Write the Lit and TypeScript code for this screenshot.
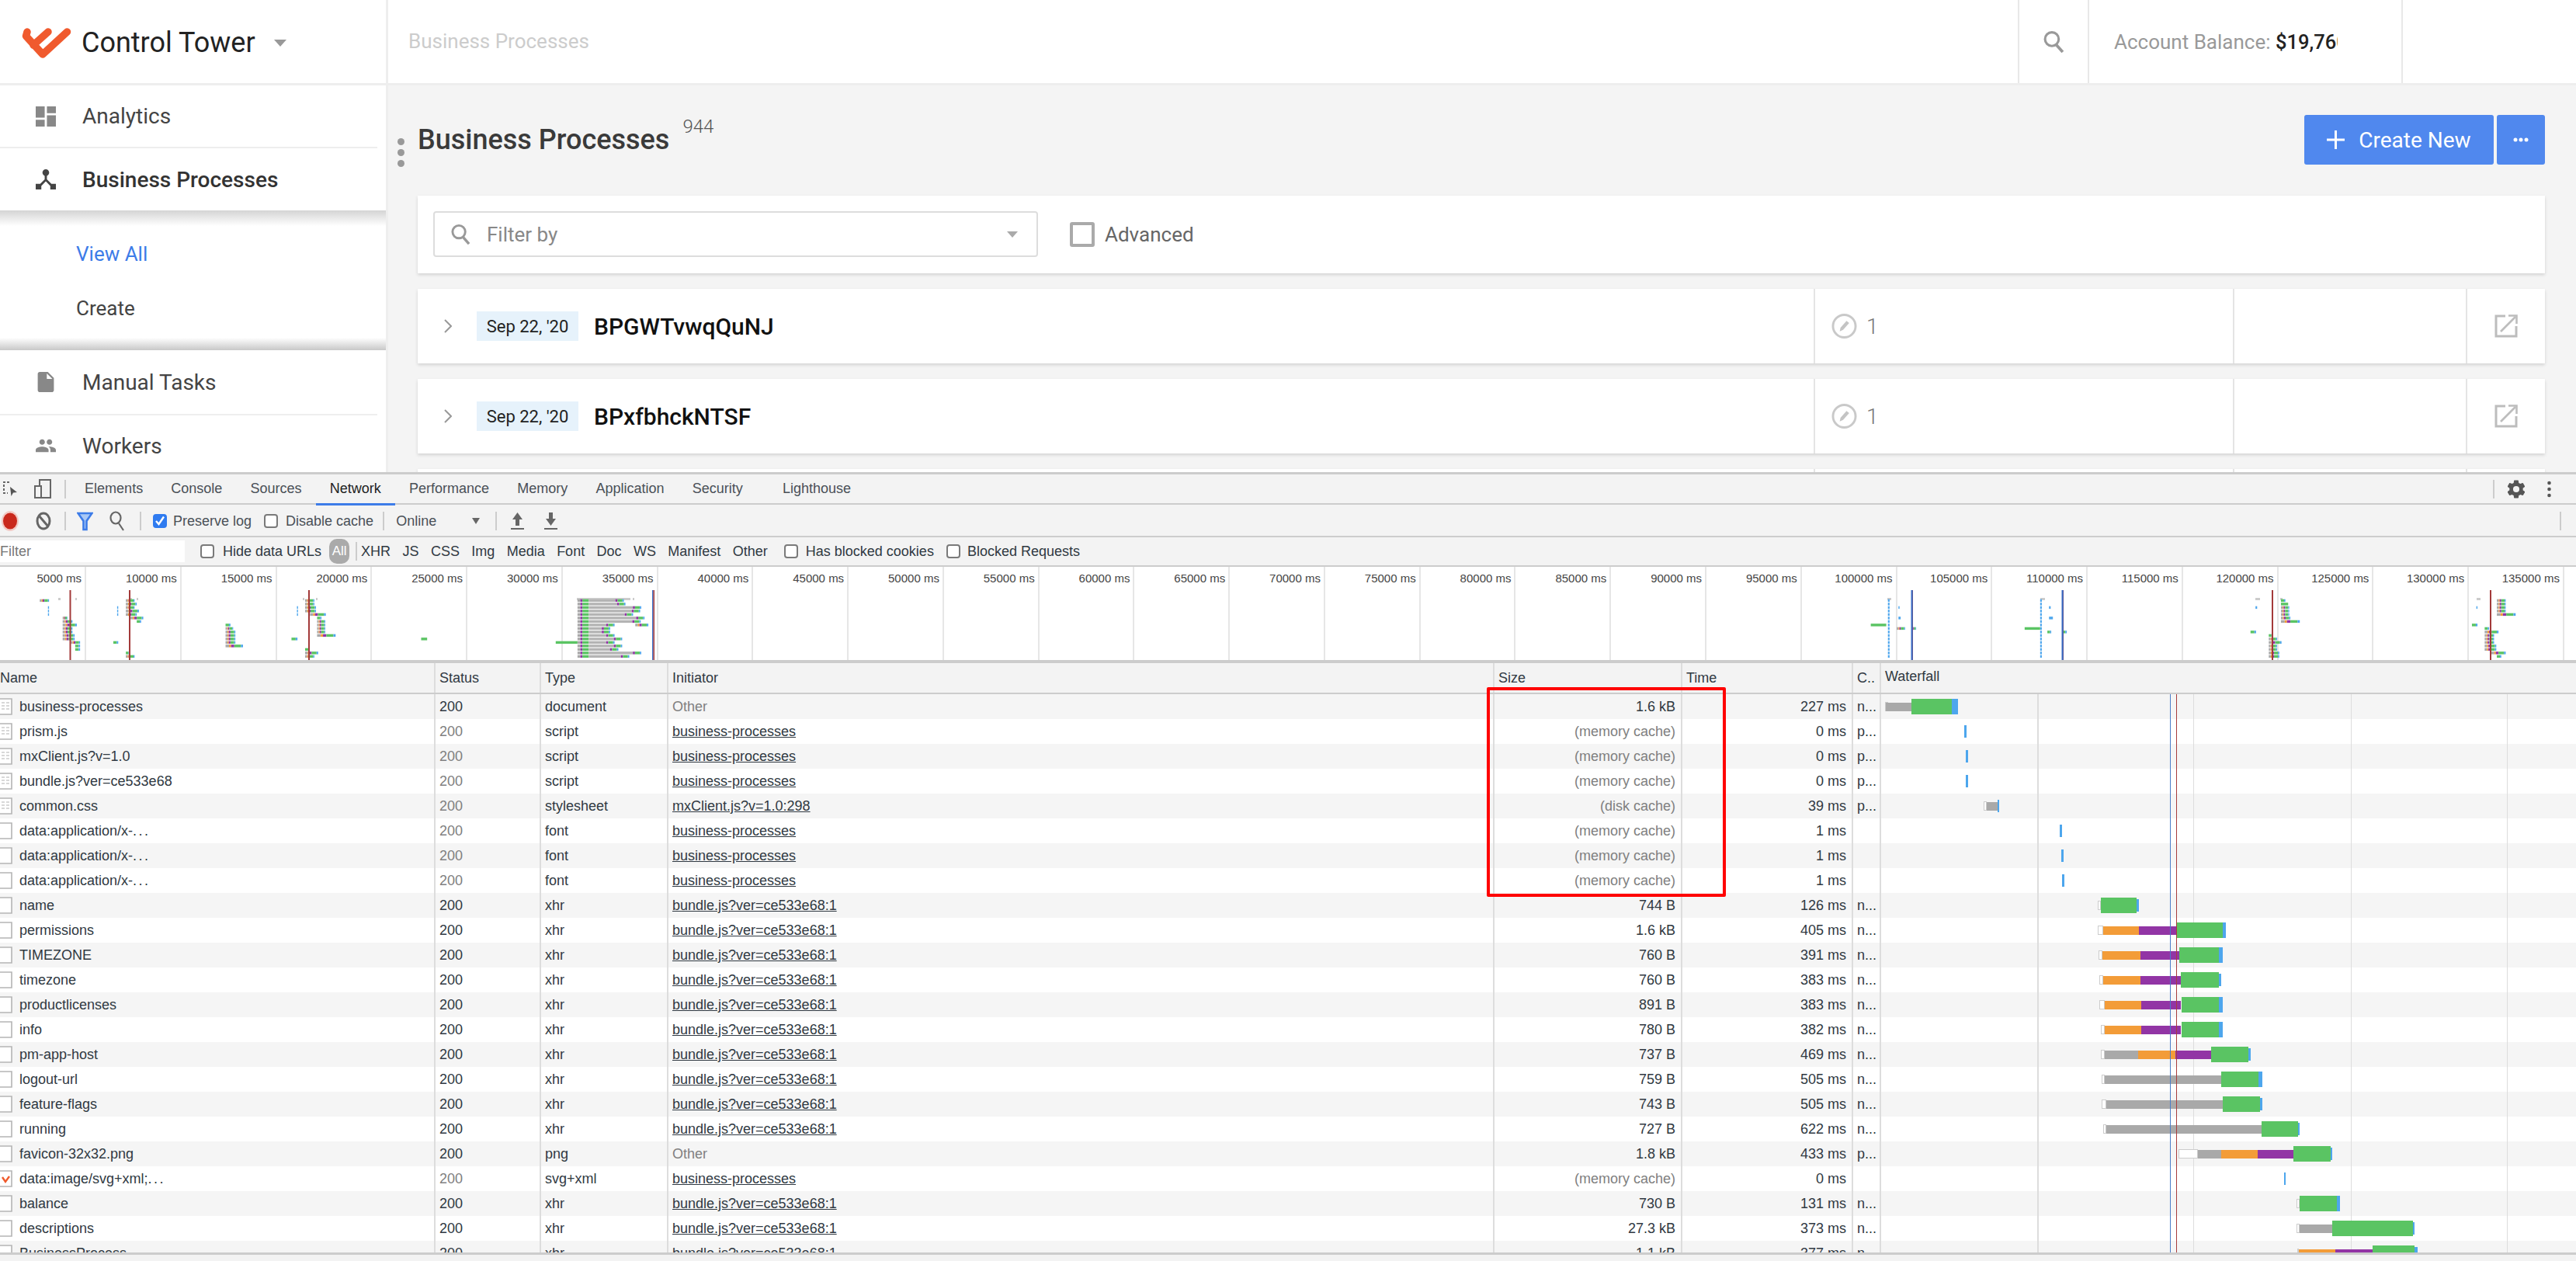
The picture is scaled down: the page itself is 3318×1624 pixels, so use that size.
import { LitElement, html, css, svg } from "lit";
import { customElement } from "lit/decorators.js";

type Req = [string, string, string, string, string, string, string, boolean?, string?];
const B1 = "bundle.js?ver=ce533e68:1";
const BP = "business-processes";
const MC = "(memory cache)";
const reqs: Req[] = [
  [BP, "200", "document", "Other", "1.6 kB", "227 ms", "n...", false, "doc"],
  ["prism.js", "200", "script", BP, MC, "0 ms", "p...", true, "doc"],
  ["mxClient.js?v=1.0", "200", "script", BP, MC, "0 ms", "p...", true, "doc"],
  ["bundle.js?ver=ce533e68", "200", "script", BP, MC, "0 ms", "p...", true, "doc"],
  ["common.css", "200", "stylesheet", "mxClient.js?v=1.0:298", "(disk cache)", "39 ms", "p...", true, "doc"],
  ["data:application/x-...", "200", "font", BP, MC, "1 ms", "", true],
  ["data:application/x-...", "200", "font", BP, MC, "1 ms", "", true],
  ["data:application/x-...", "200", "font", BP, MC, "1 ms", "", true],
  ["name", "200", "xhr", B1, "744 B", "126 ms", "n..."],
  ["permissions", "200", "xhr", B1, "1.6 kB", "405 ms", "n..."],
  ["TIMEZONE", "200", "xhr", B1, "760 B", "391 ms", "n..."],
  ["timezone", "200", "xhr", B1, "760 B", "383 ms", "n..."],
  ["productlicenses", "200", "xhr", B1, "891 B", "383 ms", "n..."],
  ["info", "200", "xhr", B1, "780 B", "382 ms", "n..."],
  ["pm-app-host", "200", "xhr", B1, "737 B", "469 ms", "n..."],
  ["logout-url", "200", "xhr", B1, "759 B", "505 ms", "n..."],
  ["feature-flags", "200", "xhr", B1, "743 B", "505 ms", "n..."],
  ["running", "200", "xhr", B1, "727 B", "622 ms", "n..."],
  ["favicon-32x32.png", "200", "png", "Other", "1.8 kB", "433 ms", "p..."],
  ["data:image/svg+xml;...", "200", "svg+xml", BP, MC, "0 ms", "", true, "logo"],
  ["balance", "200", "xhr", B1, "730 B", "131 ms", "n..."],
  ["descriptions", "200", "xhr", B1, "27.3 kB", "373 ms", "n..."],
  ["BusinessProcess", "200", "xhr", B1, "1.1 kB", "377 ms", "n..."],
];

const C = { n: "#fff", g: "#a9a9a9", o: "#f39c38", p: "#9235a5", G: "#5ac463", b: "#4da6ed" };
type K = keyof typeof C;
// Waterfall segments per row, in units of the 1.708 scale starting at x = 2400.
const wf: [K, number, number][][] = [
  [["n", 48, 54], ["g", 50, 106], ["G", 106, 194], ["b", 194, 209]],
  [["b", 222, 227]],
  [["b", 225, 231]],
  [["b", 225, 231]],
  [["n", 264, 272], ["g", 272, 295], ["b", 295, 299]],
  [["b", 432, 437]],
  [["b", 435, 441]],
  [["b", 437, 442]],
  [["n", 515, 522], ["G", 522, 602], ["b", 602, 606]],
  [["n", 515, 527], ["o", 527, 606], ["p", 606, 689], ["G", 689, 791], ["b", 791, 798]],
  [["n", 518, 526], ["o", 526, 609], ["p", 609, 696], ["G", 696, 783], ["b", 783, 791]],
  [["n", 520, 528], ["o", 528, 609], ["p", 609, 699], ["G", 699, 783], ["b", 783, 788]],
  [["n", 520, 532], ["o", 532, 611], ["p", 611, 699], ["G", 701, 783], ["b", 783, 791]],
  [["n", 522, 532], ["o", 532, 611], ["p", 611, 699], ["G", 701, 783], ["b", 783, 791]],
  [["n", 522, 532], ["g", 532, 604], ["o", 604, 686], ["p", 686, 765], ["G", 765, 848], ["b", 848, 852]],
  [["n", 525, 532], ["g", 532, 788], ["G", 788, 870], ["b", 870, 878]],
  [["n", 525, 535], ["g", 535, 791], ["G", 791, 873], ["b", 873, 878]],
  [["n", 528, 535], ["g", 535, 876], ["G", 876, 956], ["b", 956, 960]],
  [["n", 694, 737], ["g", 737, 788], ["o", 788, 868], ["p", 868, 946], ["G", 946, 1028], ["b", 1028, 1032]],
  [["b", 925, 929]],
  [["n", 953, 960], ["G", 960, 1042], ["b", 1042, 1049]],
  [["n", 953, 960], ["g", 960, 1032], ["G", 1032, 1209], ["b", 1209, 1213]],
  [["n", 955, 959], ["o", 958, 1039], ["p", 1039, 1120], ["G", 1120, 1213], ["b", 1213, 1219]],
];
const wx = (u: number) => u / 1.708;

// Overview bars: [row, x0, x1, kind], x in zoom units.
type OB = [number, number, number, string?];
const left: OB[] = [
  [0, 73, 90], [5, 115, 124], [6, 115, 133], [7, 115, 141], [8, 115, 133], [9, 115, 133], [10, 115, 137], [11, 115, 137], [12, 130, 147], [12, 208, 217, "g"], [13, 138, 147, "g"], [14, 138, 147, "g"],
  [2, 88, 90, "t"], [3, 88, 90, "t"], [4, 88, 90, "t"],
  [0, 231, 247], [1, 231, 251], [2, 231, 247], [3, 231, 255], [4, 231, 251], [5, 239, 263], [6, 251, 259, "g"], [15, 231, 238, "g"], [16, 231, 247],
  [2, 215, 217, "t"], [3, 215, 217, "t"], [4, 215, 217, "t"],
  [7, 414, 423, "g"], [8, 414, 428], [9, 414, 432], [10, 414, 432], [11, 414, 432], [12, 414, 432], [13, 414, 446],
  [0, 560, 577], [1, 560, 577], [2, 560, 580], [3, 560, 580], [4, 569, 598], [5, 582, 590, "g"], [6, 582, 597], [7, 582, 597], [8, 582, 597], [9, 582, 597], [10, 582, 616], [11, 535, 546, "g"], [14, 560, 568, "g"], [15, 560, 584], [16, 560, 577],
  [2, 545, 547, "t"], [3, 545, 547, "t"], [4, 545, 547, "t"],
  [11, 773, 784, "G"],
  [0, 1060, 1145, "l"], [1, 1060, 1148, "l"], [2, 1060, 1177, "l"], [3, 1060, 1175, "l"], [4, 1060, 1162, "l"], [5, 1060, 1183, "l"], [6, 1060, 1176, "l"], [7, 1060, 1128, "l"], [7, 1166, 1190], [8, 1060, 1120, "l"], [9, 1060, 1120, "l"], [10, 1060, 1128, "l"], [11, 1060, 1142, "l"], [12, 1020, 1060, "G"], [12, 1060, 1128, "l"], [13, 1060, 1142, "l"], [14, 1060, 1135, "l"], [15, 1060, 1177, "l"], [16, 1060, 1155, "l"],
];
const dash = (x: number) => Array.from({ length: 17 }, (_, i) => [i, x, x + 3, "t"] as OB);
const right: OB[] = [
  ...dash(325), [7, 294, 322, "G"], [8, 341, 356], [8, 368, 376], [2, 344, 346, "t"], [5, 344, 348, "t"],
  ...dash(600), [8, 572, 600, "G"], [9, 613, 620, "g"], [9, 640, 648, "g"], [2, 616, 619, "t"], [5, 616, 623, "t"],
  [0, 1035, 1043, "g"], [1, 1035, 1048, "G"], [2, 1035, 1050], [3, 1035, 1050], [4, 1035, 1050], [5, 1035, 1052], [6, 1035, 1069], [9, 980, 990, "g"], [10, 1013, 1020, "g"], [11, 1013, 1028], [12, 1013, 1036], [13, 1013, 1028], [14, 1013, 1028], [15, 1013, 1032], [16, 1013, 1032], [2, 989, 992, "t"],
  [0, 1425, 1441], [1, 1425, 1441], [2, 1425, 1441], [3, 1425, 1441], [4, 1425, 1459], [7, 1380, 1390, "g"], [8, 1403, 1411, "g"], [9, 1403, 1428], [10, 1403, 1420], [11, 1403, 1420], [12, 1403, 1420], [13, 1403, 1424], [14, 1403, 1424], [15, 1415, 1441], [16, 1425, 1433, "g"], [2, 1388, 1390, "t"],
];
const segs = (x: number, w: number, kind?: string): [string, number, number][] => {
  if (kind === "t") return [[C.b, x, w]];
  if (kind === "G") return [[C.G, x, w]];
  if (kind === "g") return [[C.G, x, w * 0.7], [C.b, x + w * 0.7, w * 0.3]];
  if (kind === "l") {
    const h = 9;
    return [[C.g, x, h * 0.4], [C.p, x + h * 0.4, h * 0.3], [C.G, x + h * 0.7, h * 0.9], ["#b4b4b4", x + h * 1.6, w - h * 2.8], [C.p, x + w - h * 1.2, h * 0.3], [C.G, x + w - h * 0.9, h * 0.7], [C.b, x + w - h * 0.2, h * 0.2]];
  }
  return [[C.g, x, w * 0.2], [C.o, x + w * 0.2, w * 0.12], [C.p, x + w * 0.32, w * 0.18], [C.G, x + w * 0.5, w * 0.38], [C.b, x + w * 0.88, w * 0.12]];
};
const obar = (b: OB, conv: (u: number) => number) => {
  const x = conv(b[1]);
  const w = conv(b[2]) - x;
  const y = 41.7 + 4.5 * b[0];
  return segs(x, w, b[3]).map(([f, sx, sw]) => svg`<rect x=${sx} y=${y} width=${sw} height="3.4" fill=${f}></rect>`);
};
const zl = (u: number) => u / 1.425;
const zr = (u: number) => 2200 + u / 1.4025;
const vline = (x: number, f: string, w = 2) => svg`<rect x=${x} y="30" width=${w} height="90" fill=${f}></rect>`;

const marks = Array.from({ length: 27 }, (_, i) => `${(i + 1) * 5000} ms`);

const dashboard = html`<svg class="nic" viewBox="3 3 18 18"><path d="M3 13h8V3H3v10zm0 8h8v-6H3v6zm10 0h8V11h-8v10zm0-18v6h8V3h-8z"/></svg>`;
const hub = html`<svg class="nic dark" viewBox="3 3 18 18"><path d="M17 16l-4-4V8.82C14.16 8.4 15 7.3 15 6c0-1.66-1.34-3-3-3S9 4.34 9 6c0 1.3.84 2.4 2 2.82V12l-4 4H3v5h5v-3.05l4-4.2 4 4.2V21h5v-5h-4z"/></svg>`;
const file = html`<svg class="nic" viewBox="2 2 20 20"><path d="M6 2c-1.1 0-1.99.9-1.99 2L4 20c0 1.1.89 2 1.99 2H18c1.1 0 2-.9 2-2V8l-6-6H6zm7 7V3.5L18.5 9H13z"/></svg>`;
const people = html`<svg class="nic" viewBox="1 1 22 22"><path d="M16 11c1.66 0 2.99-1.34 2.99-3S17.66 5 16 5c-1.66 0-3 1.34-3 3s1.34 3 3 3zm-8 0c1.66 0 2.99-1.34 2.99-3S9.66 5 8 5C6.34 5 5 6.34 5 8s1.34 3 3 3zm0 2c-2.33 0-7 1.17-7 3.5V19h14v-2.5c0-2.33-4.67-3.5-7-3.5zm8 0c-.29 0-.62.02-.97.05 1.16.84 1.97 1.97 1.97 3.45V19h6v-2.5c0-2.33-4.67-3.5-7-3.5z"/></svg>`;
const lens = (cls: string) => html`<svg class=${cls} viewBox="0 0 28 28" fill="none" stroke="currentColor"><circle cx="11.5" cy="11" r="8.5" stroke-width="3"/><path d="M17 18l8 9" stroke-width="3.6"/></svg>`;
const pencil = html`<svg class="pen" viewBox="0 0 34 34"><circle cx="17" cy="17" r="15" fill="none" stroke="#c9c9c9" stroke-width="3"/><path d="M11 24l1-5 8-9 3.5 3-8 9z" fill="#c4c4c4"/></svg>`;
const ext = html`<svg class="ext" viewBox="0 0 30 30" fill="none" stroke="#bdbdbd" stroke-width="3"><path d="M14 2H2v26h26V15"/><path d="M8 22L27 3" stroke-width="2.6"/><path d="M18 1.500h10.500V12" stroke-width="2.6"/></svg>`;

@customElement("dt-check")
class DtCheck extends LitElement {
  static properties = { on: { type: Boolean } };
  on = false;
  static styles = css`
    :host { display: block; flex: none; width: 18px; height: 18px; box-sizing: border-box; border: 2px solid #7a7a7a; border-radius: 4px; background: #fff; }
    :host([on]) { background: #2f7bf0; border-color: #2f7bf0; }
    svg { display: block; width: 14px; height: 14px; }
  `;
  render() {
    return this.on ? html`<svg viewBox="0 0 14 14" fill="none" stroke="#fff" stroke-width="2.4"><path d="M2 7l3.500 4L12 1.500"/></svg>` : html``;
  }
}

@customElement("app-root")
export class AppRoot extends LitElement {
  static styles = css`
    :host { display: block; position: relative; width: 3318px; height: 1624px; overflow: hidden; background: #fff; font-family: Roboto, "Liberation Sans", sans-serif; color: #333; }
    .top { height: 608px; overflow: hidden; display: flex; flex-direction: column; }
    .hdr { flex: none; height: 107px; border-bottom: 3px solid #eee; display: flex; }
    .brand { flex: none; border-right: 3px solid #eee; display: flex; align-items: center; padding-left: 28px; width: 469px; }
    .logo { width: 64px; height: 41px; margin-top: 4px; flex: none; }
    .brand b { font-weight: 400; font-size: 36px; color: #222; margin-left: 13px; margin-top: 3px; }
    .caret { width: 0; height: 0; border: 8px solid transparent; border-top: 9px solid #999; border-bottom: 0; margin-left: 24px; margin-top: 4px; }
    .crumb { flex: 1; padding-left: 26px; font-size: 26px; color: #ccc; line-height: 106px; white-space: nowrap; }
    .srch { flex: none; width: 88px; border-left: 2px solid #e8e8e8; display: flex; align-items: center; justify-content: center; color: #999; }
    .hlens { width: 29px; height: 29px; }
    .bal { flex: none; width: 370px; padding-left: 32px; border-left: 2px solid #e8e8e8; display: flex; align-items: center; font-size: 26px; color: #999; }
    .bal span { display: block; width: 288px; overflow: hidden; white-space: nowrap; }
    .bal b { color: #222; font-weight: 500; font-size: 25.500px; }
    .uslot { flex: none; width: 223px; border-left: 2px solid #e8e8e8; }
    .body { flex: 1; display: flex; min-height: 0; }
    .side { flex: none; width: 497px; border-right: 3px solid #eee; overflow: hidden; }
    .nav { display: flex; align-items: center; gap: 34px; padding-left: 46px; font-size: 28px; color: #444; }
    .nav.an { height: 79px; }
    .nav.bp { height: 80px; font-weight: 500; color: #333; }
    .nav.mt { height: 82px; }
    .nav.wk { height: 78px; }
    .rule { height: 2px; width: 486px; background: #eee; }
    .nic { width: 26px; height: 26px; fill: #888; flex: none; }
    .nic.dark { fill: #444; }
    .sub { height: 180px; box-sizing: border-box; padding: 21px 0 19px 98px; background: linear-gradient(#d4d4d4, #fff 20px, #fff 164px, #c8c8c8); font-size: 26px; }
    .sub div { height: 70px; line-height: 70px; color: #444; }
    .sub .on { color: #3d7ce8; }
    .main { flex: 1; min-width: 0; background: #f4f4f4; padding: 38px 40px 0 38px; }
    .head { display: flex; height: 64px; margin-bottom: 40px; align-items: center; margin-left: -26px; }
    .dots { flex: none; width: 9px; margin-right: 17px; margin-top: 32px; display: flex; flex-direction: column; gap: 5px; }
    .dots i { display: block; width: 9px; height: 9px; border-radius: 50%; background: #999; }
    h1 { margin: 0; font-size: 36px; font-weight: 500; color: #3a3a3a; white-space: nowrap; }
    .count { align-self: flex-start; margin-left: 17px; line-height: 30px; font-size: 24px; font-weight: 300; color: #555; }
    .sp { flex: 1; }
    .btn { flex: none; height: 64px; background: #5088ee; border-radius: 3px; color: #fff; display: flex; align-items: center; justify-content: center; }
    .btn.cn { width: 244px; gap: 18px; font-size: 28px; margin-right: 4px; }
    .btn.mr { width: 62px; }
    .plus { width: 23px; height: 24px; }
    .more { width: 20px; height: 6px; }
    .card { background: #fff; box-shadow: 0 2px 4px rgba(0,0,0,.14); margin-bottom: 20px; display: flex; }
    .fc { height: 100px; padding: 20px; box-sizing: border-box; align-items: flex-start; }
    .input { flex: none; width: 779px; height: 59px; box-sizing: border-box; border: 2px solid #ddd; border-radius: 4px; display: flex; align-items: center; padding-left: 20px; font-size: 26px; color: #888; }
    .ilens { width: 27px; height: 27px; color: #999; margin-right: 20px; flex: none; }
    .input .sp2 { flex: 1; }
    .darr { width: 0; height: 0; border: 7px solid transparent; border-top: 8px solid #aaa; border-bottom: 0; margin-right: 24px; }
    .adv { display: flex; align-items: center; height: 59px; margin-left: 41px; gap: 13px; font-size: 26px; color: #666; }
    .adv i { display: block; width: 32px; height: 32px; box-sizing: border-box; border: 4px solid #aaa; border-radius: 3px; }
    .pr { height: 96px; }
    .pr > div { display: flex; align-items: center; box-sizing: border-box; }
    .c1 { flex: none; width: 1798px; padding-left: 34px; }
    .chev { width: 10px; height: 18px; flex: none; }
    .pill { margin-left: 32px; width: 131px; height: 38px; background: #e6f2fb; font-size: 22px; color: #222; display: flex; align-items: center; justify-content: center; flex: none; white-space: nowrap; }
    .nm { margin-left: 20px; font-size: 30px; font-weight: 500; color: #111; }
    .c2 { flex: none; width: 540px; border-left: 2px solid #e4e4e4; padding-left: 21px; gap: 12px; font-size: 28px; font-weight: 300; color: #777; }
    .pen { width: 33px; height: 34px; flex: none; }
    .c3 { flex: none; width: 300px; border-left: 2px solid #e4e4e4; }
    .c4 { flex: 1; border-left: 2px solid #e4e4e4; justify-content: center; }
    .ext { width: 30px; height: 30px; }

    .dt { height: 1016px; box-sizing: border-box; border-top: 3px solid #ccc; background: #f3f3f3; font-family: "Liberation Sans", Arial, sans-serif; font-size: 18px; color: #303942; display: flex; flex-direction: column; }
    .row { display: flex; align-items: center; flex: none; box-sizing: border-box; white-space: nowrap; }
    .tabs { height: 39px; border-bottom: 2px solid #ccc; position: relative; }
    .dic { flex: none; }
    .sep { flex: none; width: 2px; height: 24px; background: #ccc; }
    .tab { flex: none; position: relative; padding: 0 18.100px; line-height: 37px; color: #4a5057; }
    .tab.on { color: #222; }
    .tab.on::after { content: ""; position: absolute; left: 0; right: 0; bottom: -3px; height: 3px; background: #3d7ce8; }
    .tab.lh { margin-left: 15px; }
    .tb { height: 42px; border-bottom: 2px solid #ccc; color: #4a5057; padding-top: 2px; }
    .fr { height: 38px; border-bottom: 2px solid #ccc; }
    .finp { flex: none; width: 238px; height: 28px; background: #fff; line-height: 28px; color: #777; }
    .pillall { flex: none; width: 26px; height: 32px; border-radius: 10px; background: #aaa; color: #fff; font-size: 17px; display: flex; align-items: center; justify-content: center; }
    .ft { flex: none; }
    .ov { height: 124px; flex: none; box-sizing: border-box; border-bottom: 4px solid #ccc; background: #fff; display: flex; position: relative; overflow: hidden; }
    .mk { flex: none; width: 122.770px; box-sizing: border-box; border-right: 2px solid #e6e6e6; text-align: right; padding: 6px 4px 0 0; font-size: 15px; line-height: 18px; color: #444; white-space: nowrap; }
    .mk:first-child { margin-left: -11.770px; }
    .ovbars { position: absolute; left: 0; top: 0; width: 3318px; height: 120px; }
    .tw { position: relative; height: 762px; flex: none; overflow: hidden; box-sizing: border-box; border-bottom: 3px solid #ccc; }
    .grid { display: grid; grid-template-columns: 559px 136px 164px 1064px 242px 220px 36px 897px; }
    .th { height: 40px; box-sizing: border-box; border-bottom: 2px solid #ccc; line-height: 38px; background: #f3f3f3; }
    .tr { height: 32px; line-height: 32px; background: #fff; }
    .tr.alt { background: #f5f5f5; }
    .cell { box-sizing: border-box; padding: 0 7px 0 5px; border-left: 2px solid #ddd; white-space: nowrap; overflow: hidden; position: relative; }
    .cell.name { border-left: 0; padding-left: 25px; }
    .th .cell.name { padding-left: 0; }
    .cell.r { text-align: right; }
    .cell.wf { padding-left: 5px; }
    .th .wf { line-height: 34px; }
    .ell { letter-spacing: 2.500px; }
    .gray { color: #808080; }
    .lnk { text-decoration: underline; }
    .fi { position: absolute; left: 0; top: 5px; width: 16px; height: 22px; }
    .wfs { position: absolute; left: 2423px; top: 40px; width: 895px; height: 722px; pointer-events: none; }
    .wfs rect { shape-rendering: crispEdges; }
    .red { position: absolute; left: 1915px; top: 885px; width: 308px; height: 270px; box-sizing: border-box; border: 4px solid #f00; border-radius: 2px; }
  `;

  private fileIcon(k?: string) {
    return svg`<svg class="fi" viewBox="0 0 16 22">
      <path d="M-2 1H15V21H-2z" fill="#fff" stroke="#b5b5b5" stroke-width="1.600"/>
      ${k === "doc" ? svg`<path d="M2 6h4M8 6h4M2 10h4M8 10h4M2 14h4M8 14h4" stroke="#d8d8d8" stroke-width="2"/>` : ""}
      ${k === "logo" ? svg`<path d="M3 9l4 6 5-7" fill="none" stroke="#f05a2c" stroke-width="2.400"/>` : ""}
    </svg>`;
  }

  private nameText(n: string) {
    return n.endsWith("...") ? html`${n.slice(0, -3)}<span class="ell">...</span>` : n;
  }

  private card(date: string, name: string) {
    return html`<div class="card pr">
      <div class="c1">
        <svg class="chev" viewBox="0 0 10 18" fill="none" stroke="#999" stroke-width="2"><path d="M1 1l8 8-8 8"/></svg>
        <span class="pill">${date}</span><span class="nm">${name}</span>
      </div>
      <div class="c2">${pencil}<span>1</span></div>
      <div class="c3"></div>
      <div class="c4">${ext}</div>
    </div>`;
  }

  render() {
    const M = (px: number) => `margin-left:${px}px`;
    return html`
      <div class="top">
        <div class="hdr">
          <div class="brand">
            <svg class="logo" viewBox="28 32 64 41" fill="none" stroke="#f05a2e" stroke-width="9.500" stroke-linecap="round" stroke-linejoin="round">
              <path d="M35 38L33.500 43.500L55 67L86.500 38"/><path d="M62 38L43 55"/>
            </svg>
            <b>Control Tower</b><span class="caret"></span>
          </div>
          <div class="crumb">Business Processes</div>
          <div class="srch">${lens("hlens")}</div>
          <div class="bal"><span>Account Balance: <b>$19,760.00</b></span></div>
          <div class="uslot"></div>
        </div>
        <div class="body">
          <div class="side">
            <div class="nav an">${dashboard}<span>Analytics</span></div>
            <div class="rule"></div>
            <div class="nav bp">${hub}<span>Business Processes</span></div>
            <div class="sub"><div class="on">View All</div><div>Create</div></div>
            <div class="nav mt">${file}<span>Manual Tasks</span></div>
            <div class="rule"></div>
            <div class="nav wk">${people}<span>Workers</span></div>
          </div>
          <div class="main">
            <div class="head">
              <div class="dots"><i></i><i></i><i></i></div>
              <h1>Business Processes</h1>
              <span class="count">944</span>
              <span class="sp"></span>
              <div class="btn cn">
                <svg class="plus" viewBox="0 0 23 24" stroke="#fff" stroke-width="3"><path d="M11.500 0v24M0 12h23"/></svg>
                <span>Create New</span>
              </div>
              <div class="btn mr"><svg class="more" viewBox="0 0 20 6" fill="#fff"><circle cx="3" cy="3" r="2.500"/><circle cx="10" cy="3" r="2.500"/><circle cx="17" cy="3" r="2.500"/></svg></div>
            </div>
            <div class="card fc">
              <div class="input">${lens("ilens")}<span>Filter by</span><span class="sp2"></span><span class="darr"></span></div>
              <div class="adv"><i></i><span>Advanced</span></div>
            </div>
            ${this.card("Sep 22, '20", "BPGWTvwqQuNJ")}
            ${this.card("Sep 22, '20", "BPxfbhckNTSF")}
            ${this.card("", "")}
          </div>
        </div>
      </div>
      <div class="dt">
        <div class="row tabs">
          <svg class="dic" style=${M(4)} width="20" height="20" viewBox="0 0 20 20" fill="none" stroke="#666" stroke-width="2"><path d="M8 1H1v14h5" stroke-dasharray="3 2"/><path d="M9 7l1.500 12 2.500-4.500 5-.5z" fill="#555" stroke="none"/></svg>
          <svg class="dic" style=${M(20)} width="22" height="25" viewBox="0 0 22 25" fill="none" stroke="#666" stroke-width="2"><path d="M7 8V1h14v23H9"/><rect x="1" y="9" width="8" height="15"/></svg>
          <span class="sep" style=${M(17)}></span>
          <span class="tab" style=${M(6)}>Elements</span>
          <span class="tab">Console</span>
          <span class="tab">Sources</span>
          <span class="tab on">Network</span>
          <span class="tab">Performance</span>
          <span class="tab">Memory</span>
          <span class="tab">Application</span>
          <span class="tab">Security</span>
          <span class="tab lh">Lighthouse</span>
          <span class="sp"></span>
          <span class="sep" style="margin-right:17px"></span>
          <svg class="dic" width="22" height="24" viewBox="2.500 2 19 20" fill="#555"><path d="M19.400 13c.04-.3.1-.65.1-1s-.06-.7-.1-1l2.100-1.650c.2-.15.25-.42.12-.64l-2-3.460c-.12-.22-.39-.3-.61-.22l-2.490 1a7.300 7.300 0 0 0-1.690-.98l-.38-2.650A.49.49 0 0 0 14 2h-4c-.25 0-.46.18-.49.42l-.38 2.650c-.61.25-1.170.59-1.690.98l-2.490-1c-.23-.09-.49 0-.61.22l-2 3.460c-.13.22-.07.49.12.64L4.570 11c-.04.32-.07.66-.07 1s.03.68.07 1l-2.110 1.650c-.19.15-.25.42-.12.64l2 3.460c.12.22.39.3.61.22l2.490-1c.52.4 1.080.73 1.690.98l.38 2.650c.03.24.24.42.49.42h4c.25 0 .46-.18.49-.42l.38-2.650c.61-.25 1.170-.59 1.690-.98l2.490 1c.23.09.49 0 .61-.22l2-3.460c.12-.22.07-.49-.12-.64L19.400 13zM12 15.500a3.500 3.500 0 1 1 0-7 3.500 3.500 0 0 1 0 7z"/></svg>
          <svg class="dic" style=${M(29)} width="5" height="22" viewBox="0 0 5 22" fill="#555"><circle cx="2.500" cy="3" r="2.300"/><circle cx="2.500" cy="11" r="2.300"/><circle cx="2.500" cy="19" r="2.300"/></svg>
          <span class="dic" style="width:32px"></span>
        </div>
        <div class="row tb">
          <svg class="dic" style=${M(2)} width="22" height="26" viewBox="0 0 22 26"><ellipse cx="11" cy="13" rx="11" ry="13" fill="#f2c9c4"/><ellipse cx="11" cy="13" rx="9" ry="10.500" fill="#c9281c"/></svg>
          <svg class="dic" style=${M(22)} width="20" height="24" viewBox="0 0 20 24" fill="none" stroke="#666" stroke-width="3"><ellipse cx="10" cy="12" rx="8" ry="10"/><path d="M4 5l12 14"/></svg>
          <span class="sep" style=${M(17)}></span>
          <svg class="dic" style=${M(14)} width="21" height="25" viewBox="0 0 21 25" fill="none" stroke="#3d7ce8" stroke-width="2.600"><path d="M1.500 2h18l-7 10v11h-4V12z" fill="#a9c8f5"/></svg>
          <svg class="dic" style=${M(21)} width="20" height="26" viewBox="0 0 20 26" fill="none" stroke="#666" stroke-width="2.200"><ellipse cx="8" cy="9" rx="6.500" ry="7.500"/><path d="M12 16l6 9"/></svg>
          <span class="sep" style=${M(19)}></span>
          <dt-check style=${M(15)} on></dt-check>
          <span class="ft" style=${M(8)}>Preserve log</span>
          <dt-check style=${M(16)}></dt-check>
          <span class="ft" style=${M(10)}>Disable cache</span>
          <span class="sep" style=${M(12)}></span>
          <span class="ft" style=${M(15)}>Online</span>
          <svg class="dic" style=${M(46)} width="10" height="8" viewBox="0 0 10 8" fill="#666"><path d="M0 0h10L5 8z"/></svg>
          <span class="sep" style=${M(20)}></span>
          <svg class="dic" style=${M(18)} width="17" height="22" viewBox="0 0 17 22" fill="#666"><path d="M8.500 0L15 9h-4v8H6V9H2zM0 20h17v2H0z"/></svg>
          <svg class="dic" style=${M(26)} width="17" height="22" viewBox="0 0 17 22" fill="#666"><path d="M6 0h5v8h4l-6.500 9L2 8h4zM0 20h17v2H0z"/></svg>
          <span class="sp"></span>
          <span class="sep" style="margin-right:19px"></span>
        </div>
        <div class="row fr">
          <div class="finp">Filter</div>
          <dt-check style=${M(20)}></dt-check>
          <span class="ft" style=${M(11)}>Hide data URLs</span>
          <span class="pillall" style=${M(10)}>All</span>
          <span class="sep" style=${M(8)}></span>
          <span class="ft" style=${M(5)}>XHR</span>
          <span class="ft" style=${M(15.4)}>JS</span>
          <span class="ft" style=${M(15.4)}>CSS</span>
          <span class="ft" style=${M(15.4)}>Img</span>
          <span class="ft" style=${M(15.4)}>Media</span>
          <span class="ft" style=${M(15.4)}>Font</span>
          <span class="ft" style=${M(15.4)}>Doc</span>
          <span class="ft" style=${M(15.4)}>WS</span>
          <span class="ft" style=${M(15.4)}>Manifest</span>
          <span class="ft" style=${M(15.4)}>Other</span>
          <dt-check style=${M(21)}></dt-check>
          <span class="ft" style=${M(10)}>Has blocked cookies</span>
          <dt-check style=${M(16)}></dt-check>
          <span class="ft" style=${M(9)}>Blocked Requests</span>
        </div>
        <div class="ov">
          ${marks.map((m) => html`<div class="mk">${m}</div>`)}
          <svg class="ovbars">
            <rect x="75" y="40" width="3" height="3" fill="#ccc"></rect><rect x="97" y="40" width="2" height="3" fill="#ccc"></rect>
            <rect x="168" y="40" width="2" height="3" fill="#ccc"></rect><rect x="176" y="40" width="2" height="3" fill="#ccc"></rect>
            <rect x="390" y="40" width="2" height="3" fill="#ccc"></rect><rect x="407" y="40" width="2" height="3" fill="#ccc"></rect>
            <rect x="743" y="40" width="69" height="3" fill="#ccc"></rect><rect x="815" y="40" width="2" height="3" fill="#ccc"></rect>
            <rect x="2431" y="40" width="5" height="3" fill="#ccc"></rect><rect x="2628" y="40" width="6" height="3" fill="#ccc"></rect>
            <rect x="2905" y="40" width="6" height="3" fill="#ccc"></rect><rect x="2937" y="40" width="3" height="3" fill="#ccc"></rect>
            <rect x="3190" y="40" width="5" height="3" fill="#ccc"></rect>
            ${left.map((b) => obar(b, zl))}
            ${right.map((b) => obar(b, zr))}
            ${vline(89.5, "#a33a3a")}${vline(166, "#a33a3a")}${vline(397, "#a33a3a")}
            ${vline(840, "#3a6fc8", 1.5)}${vline(841.5, "#a33a3a", 1.5)}
            ${vline(2461.5, "#3a6fc8", 1.5)}${vline(2463, "#5a5a9a", 1)}
            ${vline(2655.5, "#3a6fc8", 1.5)}${vline(2657, "#5a5a9a", 1)}
            ${vline(2926, "#a33a3a")}${vline(3207, "#a33a3a")}
          </svg>
        </div>
        <div class="tw">
          <div class="grid th">
            <div class="cell name">Name</div><div class="cell">Status</div><div class="cell">Type</div><div class="cell">Initiator</div>
            <div class="cell">Size</div><div class="cell">Time</div><div class="cell">C..</div><div class="cell wf">Waterfall</div>
          </div>
          ${reqs.map((r, i) => html`<div class="grid tr ${i % 2 === 0 ? "alt" : ""}">
            <div class="cell name">${this.fileIcon(r[8])}${this.nameText(r[0])}</div>
            <div class="cell ${r[7] ? "gray" : ""}">${r[1]}</div>
            <div class="cell">${r[2]}</div>
            <div class="cell ${r[3] === "Other" ? "gray" : "lnk"}">${r[3]}</div>
            <div class="cell r ${r[7] ? "gray" : ""}">${r[4]}</div>
            <div class="cell r">${r[5]}</div>
            <div class="cell">${r[6]}</div>
            <div class="cell wf"></div>
          </div>`)}
          <svg class="wfs">
            ${[2624, 2824.5, 3027.5, 3228.5].map((x) => svg`<rect x=${x - 2423} y="0" width="1.500" height="722" fill="#ddd"></rect>`)}
            ${wf.map((segsRow, i) => segsRow.map(([k, a, b]) => {
              const x = wx(a) + 2400 - 2423;
              const w = wx(b) - wx(a);
              const cy = i * 32 + 16;
              if (k === "G") return svg`<rect x=${x} y=${cy - 10} width=${w} height="20" fill=${C.G}></rect>`;
              if (k === "b") return svg`<rect x=${x} y=${cy - (w < 4 ? 8 : 10)} width=${w} height=${w < 4 ? 16 : 20} fill=${C.b}></rect>`;
              if (k === "n") return svg`<rect x=${x + 0.5} y=${cy - 5.5} width=${w - 1} height="11" fill="#fff" stroke="#ccc"></rect>`;
              return svg`<rect x=${x} y=${cy - 5.5} width=${w} height="11" fill=${C[k]}></rect>`;
            }))}
            <rect x="372" y="0" width="1" height="722" fill="#4a7cc8"></rect>
            <rect x="380" y="0" width="1" height="722" fill="#a83c3c"></rect>
          </svg>
        </div>
      </div>
      <div class="red"></div>
    `;
  }
}
void DtCheck;
